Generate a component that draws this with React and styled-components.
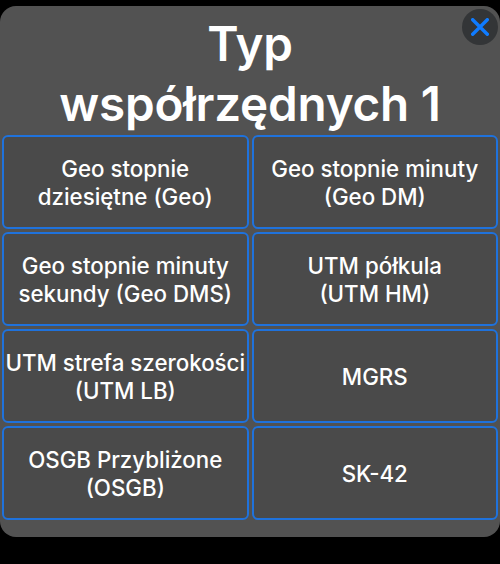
import React from 'react'
import styled, { createGlobalStyle } from 'styled-components'

const Global = createGlobalStyle`
  html, body {
    margin: 0;
    padding: 0;
    background: #000;
  }
  body {
    font-family: "Inter", "Liberation Sans", sans-serif;
    -webkit-font-smoothing: antialiased;
  }
`

const Page = styled.div`
  width: 500px;
  height: 564px;
  box-sizing: border-box;
  padding-top: 6px;
  background: #000;
  overflow: hidden;
`

const Sheet = styled.div`
  position: relative;
  height: 531px;
  box-sizing: border-box;
  padding: 0 2px;
  background: #525252;
  border-radius: 16px;
  display: flex;
  flex-direction: column;
  overflow: hidden;
`

const Title = styled.h1`
  margin: 8px 0 0;
  height: 121px;
  font-size: 47.6px;
  line-height: 60px;
  font-weight: 600;
  text-align: center;
  color: #fff;
  letter-spacing: -0.2px;
`

const Grid = styled.div`
  display: grid;
  grid-template-columns: 1fr 1fr;
  grid-auto-rows: 94px;
  gap: 3px;
`

const Option = styled.button`
  box-sizing: border-box;
  padding: 1px 0 0;
  border: 2px solid #1f72dc;
  border-radius: 6px;
  background: #4a4a4a;
  color: #fff;
  font-family: inherit;
  font-size: 22.3px;
  font-weight: 500;
  line-height: 28px;
  text-align: center;
  white-space: nowrap;
`

const Close = styled.button`
  position: absolute;
  top: 3px;
  right: 2px;
  width: 36px;
  height: 36px;
  padding: 0;
  border: none;
  border-radius: 50%;
  background: #333537;
  display: flex;
  align-items: center;
  justify-content: center;
`

const options = [
  ['Geo stopnie', 'dziesiętne (Geo)'],
  ['Geo stopnie minuty', '(Geo DM)'],
  ['Geo stopnie minuty', 'sekundy (Geo DMS)'],
  ['UTM półkula', '(UTM HM)'],
  ['UTM strefa szerokości', '(UTM LB)'],
  ['MGRS'],
  ['OSGB Przybliżone', '(OSGB)'],
  ['SK-42'],
]

export default function App() {
  return (
    <Page>
      <Global />
      <Sheet>
        <Title>Typ<br />współrzędnych 1</Title>
        <Close aria-label="Zamknij">
          <svg width="18" height="18" viewBox="0 0 18 18">
            <path d="M1.7 1.7 L16.3 16.3 M16.3 1.7 L1.7 16.3" stroke="#0f7bff" strokeWidth="3.4" strokeLinecap="round" fill="none" />
          </svg>
        </Close>
        <Grid>
          {options.map((lines, i) => (
            <Option key={i}>
              {lines.map((line, j) => (
                <React.Fragment key={j}>
                  {j > 0 && <br />}
                  {line}
                </React.Fragment>
              ))}
            </Option>
          ))}
        </Grid>
      </Sheet>
    </Page>
  )
}
